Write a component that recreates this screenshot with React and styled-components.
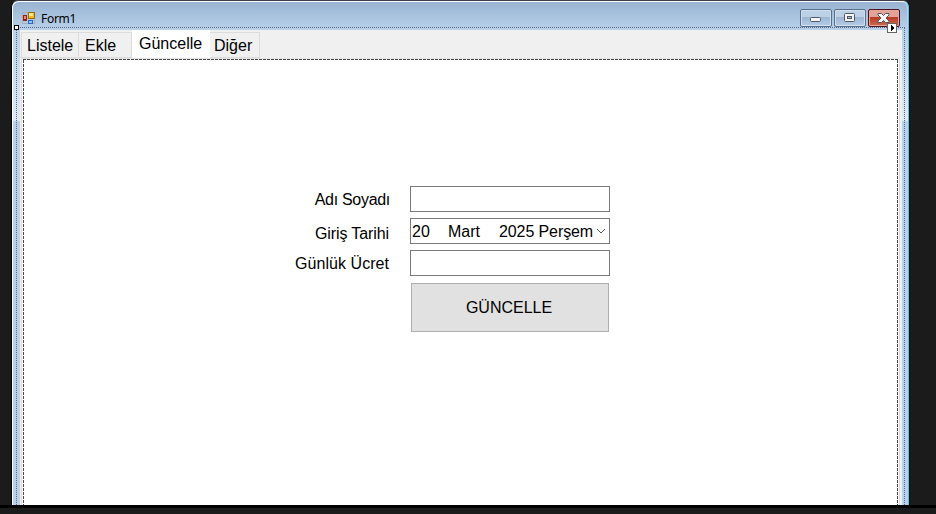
import React from "react";
import styled, { createGlobalStyle } from "styled-components";

const GlobalStyle = createGlobalStyle`
  * { box-sizing: border-box; }
  body { margin: 0; background: #1b1b1b; overflow: hidden; }
`;

const Desktop = styled.div`
  width: 936px;
  height: 514px;
  display: flex;
  flex-direction: column;
  background: #1b1b1b;
  font-family: "Liberation Sans", Arial, sans-serif;
  font-size: 16px;
  color: #000;
`;

const DesignArea = styled.div`
  height: 505px;
  padding-left: 11px;
  overflow: hidden;
`;

const BottomEdge = styled.div`
  height: 3px;
  background: #000;
`;

const Window = styled.div`
  position: relative;
  width: 899px;
  height: 520px;
  display: flex;
  flex-direction: column;
  border: 1px solid #000;
  border-top-color: #3a4048;
  border-radius: 7px 7px 0 0;
  overflow: hidden;
  background: #b9d1ea;
  box-shadow: inset 1px 1px 0 #fff, inset -1px 0 0 #35d0fa;
`;

const TitleBar = styled.header`
  height: 28px;
  flex: none;
  display: flex;
  align-items: flex-start;
  margin: 1px 2px 0 1px;
  padding: 0 7px 0 9px;
  border-radius: 6px 6px 0 0;
  background: linear-gradient(#98b4d2, #b9d1ea);
`;

const AppIcon = styled.svg`
  width: 14px;
  height: 14px;
  margin-top: 9px;
  flex: none;
`;

const Title = styled.span`
  margin: 9px auto 0 5px;
  font: 12px/15px "Noto Sans", "Open Sans", sans-serif;
  letter-spacing: -0.3px;
`;

const Captions = styled.div`
  display: flex;
  gap: 2px;
  padding-top: 7px;
`;

const CaptionButton = styled.div`
  width: 32px;
  height: 18px;
  display: flex;
  align-items: center;
  justify-content: center;
  padding-top: ${(p) => p.$drop || 0}px;
  border: 1px solid ${(p) => (p.$close ? "#4b1320" : "#5a6f8e")};
  border-radius: 2px;
  box-shadow: inset 0 0 0 1px ${(p) => (p.$close ? "#e5a69c" : "#cfdff0")};
  background: ${(p) =>
    p.$close
      ? "linear-gradient(#e3a298 0 45%, #b93b26 46%, #cd6a50)"
      : "linear-gradient(#bcd0e6 0 45%, #9cb6d3 46%, #b5cde6)"};
`;

const Client = styled.main`
  height: 491px;
  flex: none;
  display: flex;
  flex-direction: column;
  margin: 0 7px 0 8px;
  background: #f0f0f0;
`;

const SideGlow = styled.div`
  position: absolute;
  top: 29px;
  ${(p) => (p.$right ? "right: 1px; width: 6px;" : "left: 1px; width: 7px;")}
  height: 91px;
  background: linear-gradient(#b9d1ea, #e0eaf5);
`;

const Tabs = styled.nav`
  height: 28px;
  flex: none;
  display: flex;
  align-items: flex-end;
  padding-left: 1px;
`;

const Tab = styled.div`
  width: ${(p) => p.$width}px;
  height: ${(p) => (p.$active ? 28 : 26)}px;
  padding: 4px 0 0 ${(p) => p.$inset}px;
  line-height: 18px;
  white-space: nowrap;
  border: 1px solid ${(p) => (p.$active ? "#fff" : "#dcdcdc")};
  border-left-width: ${(p) => (p.$first || p.$active ? 1 : 0)}px;
  background: ${(p) => (p.$active ? "#fff" : "#f0f0f0")};
`;

const Page = styled.section`
  flex: 1;
  margin: 0 2px 0 1px;
  padding: 127px 0 0 0;
  border: 1px solid #dcdcdc;
  border-top-color: #e4e4e4;
  background: #fff;
`;

const Fields = styled.div`
  display: grid;
  grid-template-columns: 368px 200px;
  grid-template-rows: 26px 26px 26px 49px;
  column-gap: 20px;
  row-gap: 6px;
`;

const Label = styled.label`
  padding-top: ${(p) => p.$top}px;
  padding-right: ${(p) => p.$right || 0}px;
  text-align: right;
  line-height: 18px;
  letter-spacing: ${(p) => p.$tracking || 0}px;
`;

const TextBox = styled.div`
  display: flex;
  align-items: center;
  height: 26px;
  border: 1px solid #7a7a7a;
  background: #fff;
`;

const DatePart = styled.span`
  width: ${(p) => p.$width}px;
  flex: none;
  padding: 1px 0 0 1px;
  line-height: 18px;
  white-space: nowrap;
  letter-spacing: ${(p) => p.$tracking || 0}px;
`;

const UpdateButton = styled.button`
  grid-column: 2;
  width: 198px;
  height: 49px;
  margin: 1px 0 0 1px;
  padding: 0 2px 0 0;
  border: 1px solid #adadad;
  background: #e1e1e1;
  font: inherit;
  color: #000;
`;

const Selection = styled.svg`
  position: absolute;
  left: 0;
  top: 0;
  width: 897px;
  height: 505px;
  pointer-events: none;
`;

const tabs = [
  { name: "Listele", width: 58, inset: 5, first: true },
  { name: "Ekle", width: 53, inset: 6 },
  { name: "Güncelle", width: 78, inset: 6, active: true },
  { name: "Diğer", width: 50, inset: 4 },
];

function FormIcon() {
  return (
    <AppIcon viewBox="0 0 14 14" shapeRendering="crispEdges">
      <path d="M.5 1.500h12v11h-12z" fill="none" stroke="#a9b0b5" />
      <rect x="6" y="1" width="7" height="7" fill="#a06b08" />
      <rect x="7" y="2" width="5" height="5" fill="#f5b91f" />
      <rect x="7" y="2" width="4" height="3" fill="#ffe68b" />
      <rect x="1" y="4" width="4" height="6" fill="#951d12" />
      <rect x="2" y="5" width="2" height="3" fill="#f08a70" />
      <rect x="6" y="9" width="5" height="4" fill="#2d68c8" />
      <rect x="7" y="10" width="3" height="2" fill="#8fc0f5" />
    </AppIcon>
  );
}

export default function App() {
  return (
    <>
      <GlobalStyle />
      <Desktop>
        <DesignArea>
          <Window>
            <TitleBar>
              <FormIcon />
              <Title>Form1</Title>
              <Captions>
                <CaptionButton $drop={3}>
                  <svg width="12" height="6">
                    <rect x=".5" y=".5" width="10" height="4" rx="1" fill="#f5f5f5" stroke="#4d5868" />
                  </svg>
                </CaptionButton>
                <CaptionButton>
                  <svg width="12" height="10">
                    <rect x=".5" y=".5" width="10" height="8" rx="1" fill="#f5f5f5" stroke="#4d5868" />
                    <rect x="3.500" y="3.500" width="4" height="2" fill="#a6bdd8" stroke="#4d5868" />
                  </svg>
                </CaptionButton>
                <CaptionButton $close>
                  <svg width="14" height="10">
                    <path d="M1 .5h3.500l2 2 2-2h3.500v1.500l-3 3 3 3v1.500h-3.500l-2-2-2 2h-3.500v-1.500l3-3-3-3z" fill="#f8f8f8" stroke="#54545e" />
                  </svg>
                </CaptionButton>
              </Captions>
            </TitleBar>
            <SideGlow />
            <SideGlow $right />
            <Client>
              <Tabs>
                {tabs.map((t) => (
                  <Tab key={t.name} $width={t.width} $inset={t.inset} $first={t.first} $active={t.active}>
                    {t.name}
                  </Tab>
                ))}
              </Tabs>
              <Page>
                <Fields>
                  <Label $top={5} $tracking={-0.3}>Adı Soyadı</Label>
                  <TextBox />
                  <Label $top={7} $right={1} $tracking={-0.1}>Giriş Tarihi</Label>
                  <TextBox>
                    <DatePart $width={36}>20</DatePart>
                    <DatePart $width={51}>Mart</DatePart>
                    <DatePart $width={98} $tracking={-0.1}>2025 Perşem</DatePart>
                    <svg width="10" height="6">
                      <path d="M1 1l4 4 4-4" fill="none" stroke="#555" />
                    </svg>
                  </TextBox>
                  <Label $top={5} $right={1} $tracking={0.05}>Günlük Ücret</Label>
                  <TextBox />
                  <UpdateButton>GÜNCELLE</UpdateButton>
                </Fields>
              </Page>
            </Client>
            <Selection shapeRendering="crispEdges">
              <path d="M4 26.500H893" stroke="#596a7d" strokeDasharray="1 1" />
              <path d="M4.500 27V505M892.500 27V505" stroke="#596a7d" strokeDasharray="1 1" />
              <path d="M11 58.500H886M11.500 59V505M885.500 59V505" fill="none" stroke="#484848" strokeDasharray="3 1" />
              <rect x="2.500" y="24.500" width="4" height="4" fill="#fff" stroke="#000" />
              <rect x="875.500" y="22.500" width="9" height="9" rx="1" fill="#fff" stroke="#666" />
              <path d="M879 24v6l3-3z" fill="#000" />
            </Selection>
          </Window>
        </DesignArea>
        <BottomEdge />
      </Desktop>
    </>
  );
}
